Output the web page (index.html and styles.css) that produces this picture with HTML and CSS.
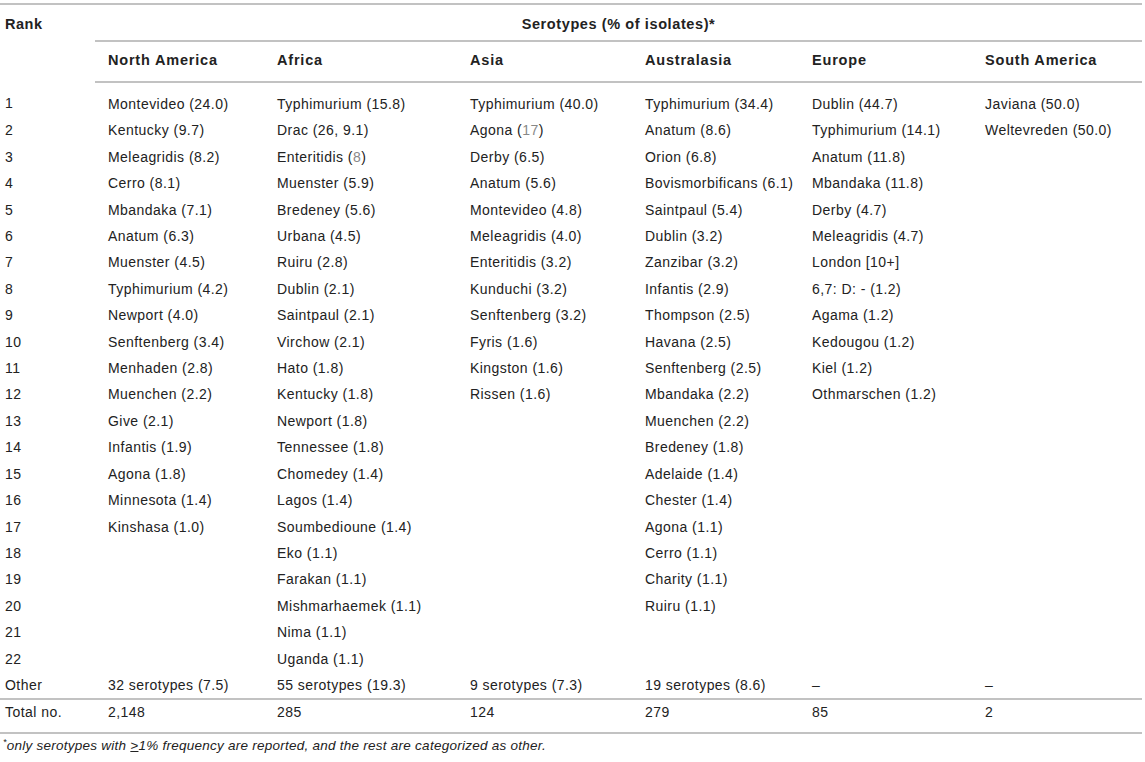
FILE: index.html
```html
<!DOCTYPE html>
<html lang="en">
<head>
<meta charset="utf-8">
<title>Serotypes table</title>
<link rel="stylesheet" href="styles.css">
</head>
<body>
<table class="tbl">
  <colgroup>
    <col class="c-rank"><col class="c-na"><col class="c-af"><col class="c-as"><col class="c-au"><col class="c-eu"><col class="c-sa">
  </colgroup>
  <thead>
    <tr class="h1">
      <th class="rank" rowspan="2">Rank</th>
      <th class="span" colspan="6">Serotypes (% of isolates)*</th>
    </tr>
    <tr class="h2">
      <th>North America</th><th>Africa</th><th>Asia</th><th>Australasia</th><th>Europe</th><th>South America</th>
    </tr>
  </thead>
  <tbody>
    <tr class="first"><td class="rank">1</td><td>Montevideo (24.0)</td><td>Typhimurium (15.8)</td><td>Typhimurium (40.0)</td><td>Typhimurium (34.4)</td><td>Dublin (44.7)</td><td>Javiana (50.0)</td></tr>
    <tr><td class="rank">2</td><td>Kentucky (9.7)</td><td>Drac (26, 9.1)</td><td>Agona (<span class="muted">17</span>)</td><td>Anatum (8.6)</td><td>Typhimurium (14.1)</td><td>Weltevreden (50.0)</td></tr>
    <tr><td class="rank">3</td><td>Meleagridis (8.2)</td><td>Enteritidis (<span class="muted">8</span>)</td><td>Derby (6.5)</td><td>Orion (6.8)</td><td>Anatum (11.8)</td><td></td></tr>
    <tr><td class="rank">4</td><td>Cerro (8.1)</td><td>Muenster (5.9)</td><td>Anatum (5.6)</td><td>Bovismorbificans (6.1)</td><td>Mbandaka (11.8)</td><td></td></tr>
    <tr><td class="rank">5</td><td>Mbandaka (7.1)</td><td>Bredeney (5.6)</td><td>Montevideo (4.8)</td><td>Saintpaul (5.4)</td><td>Derby (4.7)</td><td></td></tr>
    <tr><td class="rank">6</td><td>Anatum (6.3)</td><td>Urbana (4.5)</td><td>Meleagridis (4.0)</td><td>Dublin (3.2)</td><td>Meleagridis (4.7)</td><td></td></tr>
    <tr><td class="rank">7</td><td>Muenster (4.5)</td><td>Ruiru (2.8)</td><td>Enteritidis (3.2)</td><td>Zanzibar (3.2)</td><td>London [10+]</td><td></td></tr>
    <tr><td class="rank">8</td><td>Typhimurium (4.2)</td><td>Dublin (2.1)</td><td>Kunduchi (3.2)</td><td>Infantis (2.9)</td><td>6,7: D: - (1.2)</td><td></td></tr>
    <tr><td class="rank">9</td><td>Newport (4.0)</td><td>Saintpaul (2.1)</td><td>Senftenberg (3.2)</td><td>Thompson (2.5)</td><td>Agama (1.2)</td><td></td></tr>
    <tr><td class="rank">10</td><td>Senftenberg (3.4)</td><td>Virchow (2.1)</td><td>Fyris (1.6)</td><td>Havana (2.5)</td><td>Kedougou (1.2)</td><td></td></tr>
    <tr><td class="rank">11</td><td>Menhaden (2.8)</td><td>Hato (1.8)</td><td>Kingston (1.6)</td><td>Senftenberg (2.5)</td><td>Kiel (1.2)</td><td></td></tr>
    <tr><td class="rank">12</td><td>Muenchen (2.2)</td><td>Kentucky (1.8)</td><td>Rissen (1.6)</td><td>Mbandaka (2.2)</td><td>Othmarschen (1.2)</td><td></td></tr>
    <tr><td class="rank">13</td><td>Give (2.1)</td><td>Newport (1.8)</td><td></td><td>Muenchen (2.2)</td><td></td><td></td></tr>
    <tr><td class="rank">14</td><td>Infantis (1.9)</td><td>Tennessee (1.8)</td><td></td><td>Bredeney (1.8)</td><td></td><td></td></tr>
    <tr><td class="rank">15</td><td>Agona (1.8)</td><td>Chomedey (1.4)</td><td></td><td>Adelaide (1.4)</td><td></td><td></td></tr>
    <tr><td class="rank">16</td><td>Minnesota (1.4)</td><td>Lagos (1.4)</td><td></td><td>Chester (1.4)</td><td></td><td></td></tr>
    <tr><td class="rank">17</td><td>Kinshasa (1.0)</td><td>Soumbedioune (1.4)</td><td></td><td>Agona (1.1)</td><td></td><td></td></tr>
    <tr><td class="rank">18</td><td></td><td>Eko (1.1)</td><td></td><td>Cerro (1.1)</td><td></td><td></td></tr>
    <tr><td class="rank">19</td><td></td><td>Farakan (1.1)</td><td></td><td>Charity (1.1)</td><td></td><td></td></tr>
    <tr><td class="rank">20</td><td></td><td>Mishmarhaemek (1.1)</td><td></td><td>Ruiru (1.1)</td><td></td><td></td></tr>
    <tr><td class="rank">21</td><td></td><td>Nima (1.1)</td><td></td><td></td><td></td><td></td></tr>
    <tr><td class="rank">22</td><td></td><td>Uganda (1.1)</td><td></td><td></td><td></td><td></td></tr>
    <tr class="other"><td class="rank">Other</td><td>32 serotypes (7.5)</td><td>55 serotypes (19.3)</td><td>9 serotypes (7.3)</td><td>19 serotypes (8.6)</td><td>–</td><td>–</td></tr>
    <tr class="total"><td class="rank">Total no.</td><td>2,148</td><td>285</td><td>124</td><td>279</td><td>85</td><td>2</td></tr>
  </tbody>
</table>
<p class="note"><sup>*</sup>only serotypes with <u>&gt;</u>1% frequency are reported, and the rest are categorized as other.</p>
</body>
</html>
```

FILE: styles.css
```css
html, body {
  margin: 0;
  padding: 0;
  background: #ffffff;
}
body {
  padding-top: 3px;
  font-family: "Liberation Sans", Arial, sans-serif;
  color: #222222;
}
.tbl {
  width: 1142px;
  border-collapse: collapse;
  table-layout: fixed;
  font-size: 14px;
  letter-spacing: 0.45px;
  border-top: 2px solid #c2c2c2;
  border-bottom: 2px solid #c2c2c2;
}
.c-rank { width: 95px; }
.c-na { width: 169px; }
.c-af { width: 193px; }
.c-as { width: 175px; }
.c-au { width: 167px; }
.c-eu { width: 173px; }
.c-sa { width: 170px; }

.tbl th {
  font-weight: bold;
  font-size: 14.5px;
  letter-spacing: 0.8px;
  text-align: left;
  line-height: 16px;
  padding: 0 0 0 13px;
  vertical-align: top;
  white-space: nowrap;
}
.tbl th.rank {
  padding-left: 5px;
  padding-top: 11px;
  letter-spacing: 0.5px;
}
.h1 th.span {
  text-align: center;
  letter-spacing: 0.6px;
  padding: 11px 0 8px 0;
  border-bottom: 2px solid #c2c2c2;
}
.h2 th {
  padding-top: 10px;
  padding-bottom: 13px;
  border-bottom: 2px solid #c2c2c2;
}
.tbl td {
  padding: 5px 0 5px 13px;
  line-height: 16.4px;
  white-space: nowrap;
  vertical-align: top;
}
.tbl td.rank {
  padding-left: 5px;
}
.first td {
  padding-top: 13px;
}
.total td {
  border-top: 2px solid #c2c2c2;
  padding-top: 4px;
  padding-bottom: 11px;
}
.muted {
  color: #888888;
}
.note {
  margin: 4px 0 0 0;
  padding-left: 3px;
  font-size: 13.5px;
  font-style: italic;
  line-height: 15px;
  letter-spacing: 0.25px;
}
.note sup {
  font-size: 9px;
  vertical-align: top;
  line-height: 9px;
}
```
